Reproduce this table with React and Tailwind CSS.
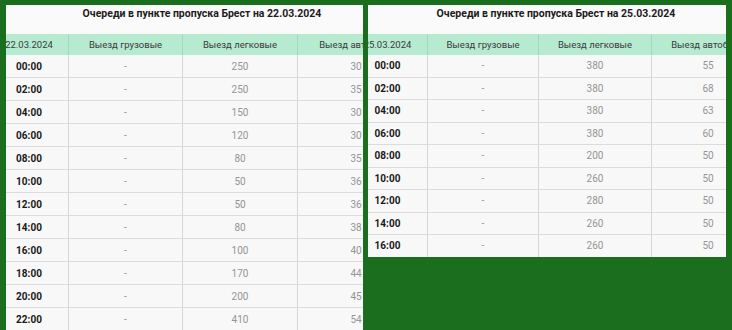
import React from "react";

const left = {
  date: "22.03.2024",
  panel: "w-[357px] h-[325px]",
  inner: "w-[424px] -ml-[16px]",
  rowH: "h-[23px]",
  cols: ["w-[79px]", "w-[114px]", "w-[115px]", "w-[116px]"],
  rows: [
    ["00:00", "250", "30"],
    ["02:00", "250", "35"],
    ["04:00", "150", "30"],
    ["06:00", "120", "30"],
    ["08:00", "80", "35"],
    ["10:00", "50", "36"],
    ["12:00", "50", "36"],
    ["14:00", "80", "38"],
    ["16:00", "100", "40"],
    ["18:00", "170", "44"],
    ["20:00", "200", "45"],
    ["22:00", "410", "54"],
  ],
};
const right = {
  date: "25.03.2024",
  panel: "w-[358px] h-[252px]",
  inner: "w-[416px] -ml-[20px]",
  rowH: "h-[22.5px]",
  cols: ["w-[80px]", "w-[111px]", "w-[113px]", "w-[112px]"],
  rows: [
    ["00:00", "380", "55"],
    ["02:00", "380", "68"],
    ["04:00", "380", "63"],
    ["06:00", "380", "60"],
    ["08:00", "200", "50"],
    ["10:00", "260", "50"],
    ["12:00", "280", "50"],
    ["14:00", "260", "50"],
    ["16:00", "260", "50"],
  ],
};

function Panel({ data }) {
  const { cols } = data;
  return (
    <div className={"overflow-hidden bg-[#f8f8f8] shrink-0 " + data.panel}>
      <div className={data.inner}>
        <div className="h-[29px] bg-[#fafafa] pt-[3px] text-center text-[10.5px] leading-[12px] font-bold text-[#1c1c1c]">
          Очереди в пункте пропуска Брест на {data.date}
        </div>
        <div className="flex h-[21px] bg-[#b6ead1] text-[9.5px] text-[#3a3a3a]">
          {[data.date, "Выезд грузовые", "Выезд легковые", "Выезд автобусы"].map((t, i) => (
            <div
              key={i}
              className={
                "flex shrink-0 items-center justify-center whitespace-nowrap pt-[1px] " +
                cols[i] +
                (i < 3 ? " border-r border-[#a3d9bf]" : "")
              }
            >
              {t}
            </div>
          ))}
        </div>
        {data.rows.map((r, idx) => (
          <div key={idx} className={"flex border-b border-[#dcdcdc] text-[10px] " + data.rowH}>
            <div
              className={
                "flex shrink-0 items-center justify-center border-r border-[#d6d6d6] font-bold text-[#1a1a1a] " +
                cols[0]
              }
            >
              {r[0]}
            </div>
            <div
              className={
                "flex shrink-0 items-center justify-center border-r border-[#d6d6d6] text-[#959595] " +
                cols[1]
              }
            >
              -
            </div>
            <div
              className={
                "flex shrink-0 items-center justify-center border-r border-[#d6d6d6] text-[#959595] " +
                cols[2]
              }
            >
              {r[1]}
            </div>
            <div className={"flex shrink-0 items-center justify-center text-[#959595] " + cols[3]}>
              {r[2]}
            </div>
          </div>
        ))}
      </div>
    </div>
  );
}

export default function App() {
  return (
    <div className="w-[732px] h-[330px] bg-[#1c6e1f] flex items-start gap-[5px] pl-[6px] pt-[5px] overflow-hidden font-['Roboto','Noto_Sans',sans-serif]">
      <Panel data={left} />
      <Panel data={right} />
    </div>
  );
}
